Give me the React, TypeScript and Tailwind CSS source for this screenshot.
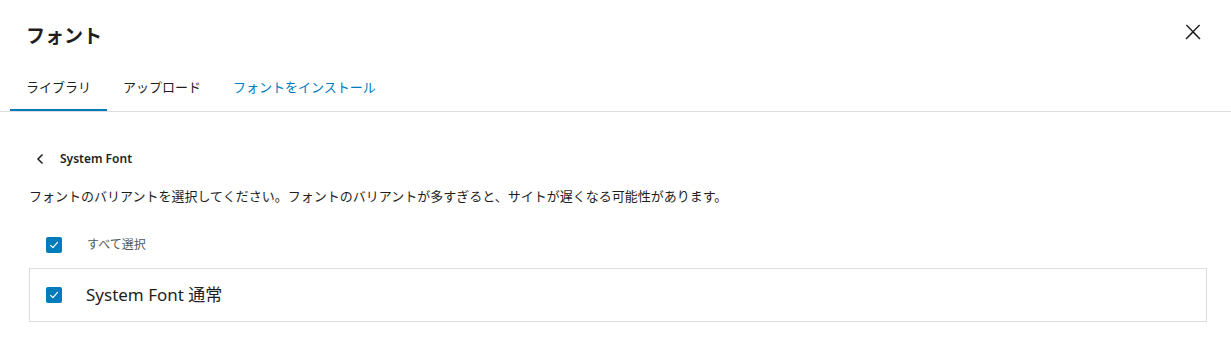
import { useState } from "react";

const TABS = ["ライブラリ", "アップロード", "フォントをインストール"];

function Check({ checked, onChange }: { checked: boolean; onChange: () => void }) {
  return (
    <button
      type="button"
      onClick={onChange}
      className={`w-4 h-4 rounded-[2px] flex items-center justify-center shrink-0 ${
        checked ? "bg-[#007cba]" : "bg-white border border-[#1e1e1e]"
      }`}
    >
      {checked && (
        <svg width="12" height="12" viewBox="0 0 12 12" fill="none">
          <path d="M2.6 6.4l2.3 2.3 4.6-5.4" stroke="#fff" strokeWidth="1.2" strokeLinecap="round" strokeLinejoin="round" />
        </svg>
      )}
    </button>
  );
}

export default function App() {
  const [tab] = useState(0);
  const [regular, setRegular] = useState(true);

  return (
    <div className="w-[1231px] h-[355px] bg-white text-[#1e1e1e] font-['Noto_Sans','Noto_Sans_CJK_JP',sans-serif] overflow-hidden">
      {/* Header */}
      <div className="h-16 pt-2 pl-[26px] pr-[26px] flex items-center justify-between">
        <h1 className="text-[19px] font-bold leading-none">フォント</h1>
        <button type="button" className="w-6 h-6 -mt-2">
          <svg width="24" height="24" viewBox="0 0 24 24" fill="#1e1e1e">
            <path d="M13 11.8l6.1-6.3-1-1-6.1 6.2-6.1-6.2-1 1 6.1 6.3-6.5 6.7 1 1 6.5-6.6 6.5 6.6 1-1z" />
          </svg>
        </button>
      </div>

      {/* Tabs */}
      <div className="flex border-b border-[#dddddd] pl-[10px]">
        {TABS.map((t, i) => (
          <button
            key={t}
            type="button"
            className={`h-[47px] px-4 text-[13px] ${
              i === tab ? "shadow-[inset_0_-2px_0_#007cba]" : ""
            } ${i === 2 ? "text-[#007cba]" : "text-[#1e1e1e]"}`}
          >
            {t}
          </button>
        ))}
      </div>

      {/* Content */}
      <div className="pl-[29px] pr-6">
        <div className="mt-[35px] h-6 flex items-center pl-[6px]">
          <svg width="12" height="14" viewBox="0 0 12 14" fill="none">
            <path d="M7.5 2.5L3 7l4.5 4.5" stroke="#1e1e1e" strokeWidth="1.5" />
          </svg>
          <span className="ml-[13px] text-[12px] font-semibold">System Font</span>
        </div>

        <p className="mt-[15px] text-[13px] leading-5">
          フォントのバリアントを選択してください。フォントのバリアントが多すぎると、サイトが遅くなる可能性があります。
        </p>

        <div className="mt-[23px] h-8 flex items-center pl-[17px]">
          <Check checked={regular} onChange={() => setRegular(!regular)} />
          <span className="ml-[25px] text-[12px] text-[#50575e]">すべて選択</span>
        </div>

        <div className="mt-[7px] h-[54px] border border-[#dddddd] flex items-center pl-4">
          <Check checked={regular} onChange={() => setRegular(!regular)} />
          <span className="ml-[24px] text-[17px] text-[#1e1e1e]">System Font 通常</span>
        </div>
      </div>
    </div>
  );
}
